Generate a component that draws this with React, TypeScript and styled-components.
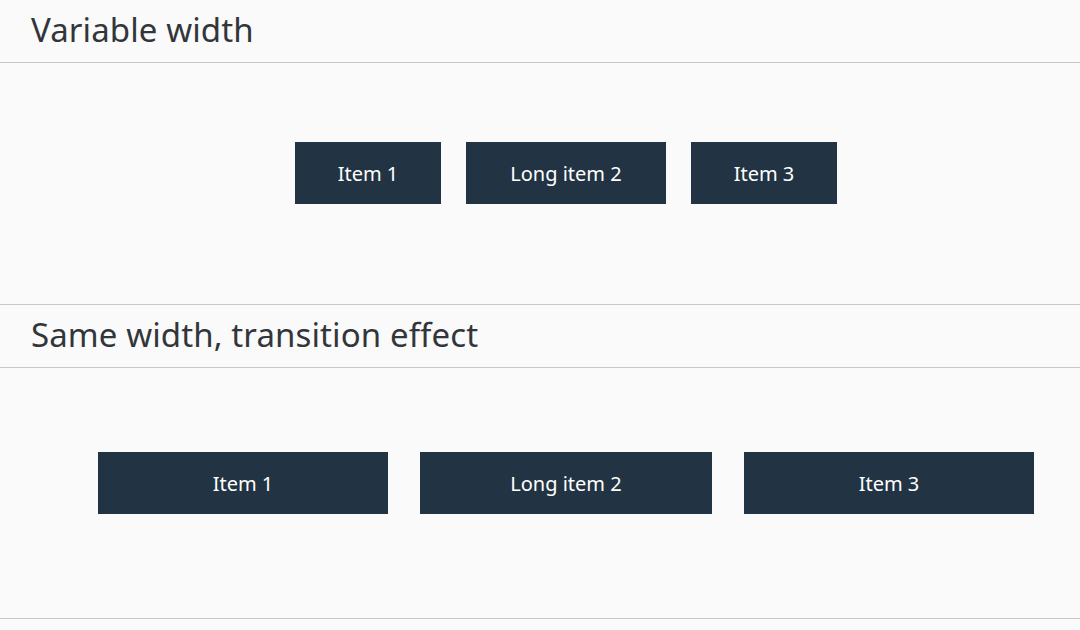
import React from "react";
import styled, { createGlobalStyle } from "styled-components";

const GlobalStyle = createGlobalStyle`
  html, body {
    margin: 0;
    padding: 0;
    background-color: #fafafa;
    font-family: "Noto Sans", "Open Sans", sans-serif;
  }
`;

const Page = styled.div`
  width: 1080px;
  display: flex;
  flex-direction: column;
`;

const Heading = styled.h2`
  margin: 0;
  height: 59px;
  padding: 0 0 3px 31px;
  display: flex;
  align-items: center;
  font-size: 33px;
  font-weight: 400;
  letter-spacing: 0.1px;
  color: #32363a;
  border-bottom: 1px solid #c8c8c8;
  box-sizing: content-box;
`;

const Demo = styled.section<{ $top: number; $height: number }>`
  height: ${(p) => p.$height}px;
  padding: ${(p) => p.$top}px 0 0 52px;
  box-sizing: border-box;
  border-bottom: 1px solid #c8c8c8;
`;

const Row = styled.div<{ $gap: number }>`
  display: flex;
  justify-content: center;
  gap: ${(p) => p.$gap}px;
`;

const Item = styled.button<{ $width: number }>`
  width: ${(p) => p.$width}px;
  height: 62px;
  border: none;
  border-radius: 0;
  background-color: #223443;
  color: #ffffff;
  font-family: "Noto Sans", "Open Sans", sans-serif;
  font-size: 20px;
  cursor: pointer;
  transition: background-color 0.3s ease;
  &:hover {
    background-color: #354a5f;
  }
`;

const App = () => (
  <Page>
    <GlobalStyle />
    <Heading>Variable width</Heading>
    <Demo $top={79} $height={242}>
      <Row $gap={25}>
        <Item $width={146}>Item 1</Item>
        <Item $width={200}>Long item 2</Item>
        <Item $width={146}>Item 3</Item>
      </Row>
    </Demo>
    <Heading>Same width, transition effect</Heading>
    <Demo $top={84} $height={251}>
      <Row $gap={32}>
        <Item $width={290}>Item 1</Item>
        <Item $width={292}>Long item 2</Item>
        <Item $width={290}>Item 3</Item>
      </Row>
    </Demo>
  </Page>
);

export default App;
